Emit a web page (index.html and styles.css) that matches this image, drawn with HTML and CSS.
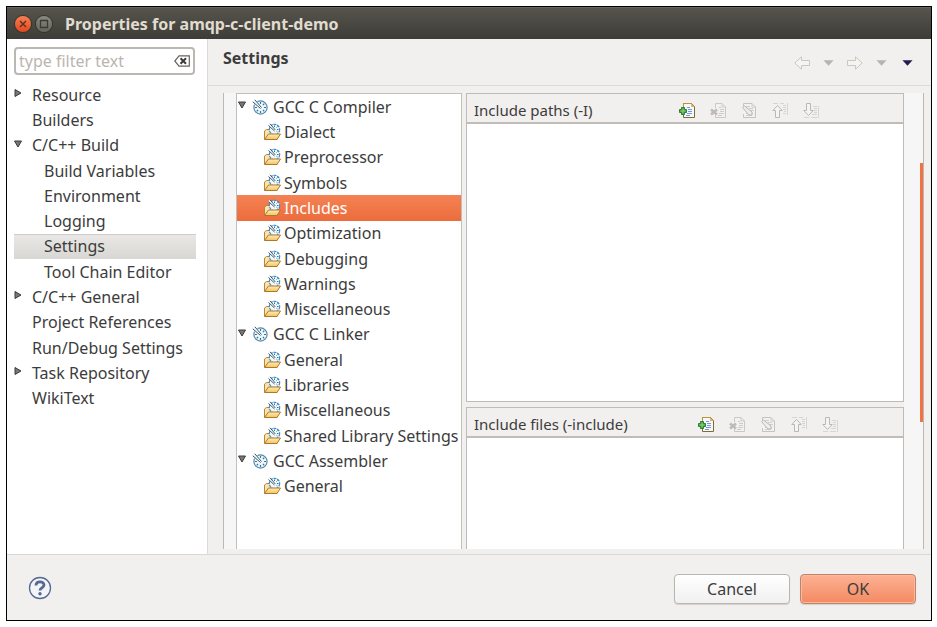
FILE: index.html
```html
<!DOCTYPE html>
<html lang="en">
<head>
<meta charset="utf-8">
<meta name="viewport" content="width=device-width, initial-scale=1">
<title>Properties for amqp-c-client-demo</title>
<link rel="stylesheet" href="styles.css">
</head>
<body>
<svg class="sprites" aria-hidden="true">
  <defs>
    <linearGradient id="folder-fill" x1="0" y1="0" x2="0" y2="1">
      <stop offset="0" stop-color="#fdeebb"/><stop offset="1" stop-color="#f3c45c"/>
    </linearGradient>
    <symbol id="right" viewBox="0 0 8 8"><path d="M1 .5v7L7 4z" fill="#777" stroke="#3c3c3c"/></symbol>
    <symbol id="down" viewBox="0 0 8 8"><path d="M.5 1h7L4 7z" fill="#777" stroke="#3c3c3c"/></symbol>
    <symbol id="tool" viewBox="0 0 16 16">
      <circle cx="8.500" cy="8.500" r="6.600" fill="#eef7fb" stroke="#5b89a8" stroke-width="1.200"/>
      <path d="M8.500 3v2M8.500 12v2M3 8.500h2M12 8.500h2M12.300 4.700l-1.400 1.400M4.700 12.300l1.400-1.400M12.300 12.300l-1.400-1.400" stroke="#2c79a5" stroke-width="1.200"/>
      <path d="M1 2.500l7 7M2.500 1l7 7" stroke="#fff" stroke-width="2"/>
      <path d="M.8 2.800l7.700 6.700M2.800.8l6.700 7.700" stroke="#2c4f6a"/>
    </symbol>
    <symbol id="folder" viewBox="0 0 18 18">
      <path d="M1.500 16V8l2-1.500h3l2 2h6v7.500z" fill="#f8e4b0" stroke="#bd8433"/>
      <circle cx="11.500" cy="6.500" r="5.200" fill="#f1f9fd" stroke="#3c86b8" stroke-width="1.100" stroke-dasharray="3 .800"/>
      <path d="M11.500 2.500v1.500M15.500 6.500H14M14.500 3.500l-1 1M14.500 9l-1-.800" stroke="#2374aa"/>
      <path d="M6 1.500l6 6" stroke="#fff" stroke-width="2.400"/>
      <path d="M5.500 2.500l6 5.500M7 .8l5.300 6.200" stroke="#244866" stroke-width=".900"/>
      <path d="M1.500 16.500l4-5.500h12l-3.500 5.500z" fill="url(#folder-fill)" stroke="#b0762a"/>
    </symbol>
    <symbol id="add" viewBox="0 0 16 16">
      <path d="M4.500 1.500h8l3 3v11h-11z" fill="#f4f8ff" stroke="#806b35"/>
      <path d="M4.500 5V1.500H12L15.500 5" fill="none" stroke="#c49032"/><path d="M12 1.500V5h3.500z" fill="#e6b65c"/>
      <path d="M8 5.500h3M9 7.500h4M9 9.500h4M8 11.500h5M7 13.500h4" stroke="#7799d2"/>
      <path d="M2.500 5.500h3v2h2v3h-2v2h-3v-2h-2v-3h2z" fill="#4aa13d" stroke="#2b7d3b"/><path d="M4 6.500v5M1.500 9h5" stroke="#8ad470"/>
    </symbol>
    <symbol id="delete" viewBox="0 0 16 16">
      <path d="M5.500 6V1.500H12L15.500 5v10.500h-10V13" fill="#f2f1ef" stroke="#cbc9c6"/><path d="M12 1.500V5h3.500M9 5.500h2M10 7.500h4M10 9.500h4M9 11.500h5M8 13.500h4" fill="none" stroke="#cecccb"/>
      <path d="M1 7.500l6 5M7 7.500l-6 5" stroke="#bfb9b7" stroke-width="2.600"/>
    </symbol>
    <symbol id="edit" viewBox="0 0 16 16">
      <path d="M2.500 4V1.500H11L14.500 5v10.500h-12V12" fill="#f2f1ef" stroke="#c5c3c0"/><path d="M11 1.500V5h3.500M5 4.500h4M8 6.500h4M9 8.500h4M5 11.500h7M5 13.500h6" fill="none" stroke="#d0cecb"/>
      <path d="M1.500 5.500l2-1.500 7.500 6v3H8z" fill="#efedeb" stroke="#b9b7b4"/>
    </symbol>
    <symbol id="up" viewBox="0 0 16 16">
      <path d="M1 1.500h5M8 1.500h4M11 3.500h3M11 5.500h3M11 7.500h3M12 9.500h2M11 11.500h3M15.500 1v12" stroke="#d6d5d2"/>
      <path d="M5.500 3.500L.8 8.500h2.700v7h4v-7h2.700z" fill="#f5f4f3" stroke="#bab8b5"/>
    </symbol>
    <symbol id="down-move" viewBox="0 0 16 16">
      <path d="M10 4.500h4M11 6.500h3M11 8.500h3M11 10.500h3M9 12.500h5M1 15.500h5M8 15.500h6M15.500 4v12" stroke="#d6d5d2"/>
      <path d="M5.500 13.500L.8 8.500h2.700v-7h4v7h2.700z" fill="#f5f4f3" stroke="#bab8b5"/>
    </symbol>
    <symbol id="back" viewBox="0 0 16 14"><path d="M.8 7L7.500.8v3.700h8v5h-8v3.700z" fill="#f5f4f1" stroke="#c9c7c2"/></symbol>
    <symbol id="forward" viewBox="0 0 16 14"><path d="M15.200 7L8.500.8v3.700h-8v5h8v3.700z" fill="#f5f4f1" stroke="#c9c7c2"/></symbol>
    <symbol id="menu" viewBox="0 0 12 6"><path d="M.5 0h11L6 6z" fill="currentColor"/></symbol>
  </defs>
</svg>

<main class="window">
  <header class="titlebar">
    <button class="window-button close" aria-label="Close"><svg viewBox="0 0 16 16"><path d="M5 5l6 6M11 5l-6 6" stroke="#64301f" stroke-width="1.500"/></svg></button>
    <button class="window-button maximize" aria-label="Maximize"><svg viewBox="0 0 16 16"><path d="M4.500 4.500h7v7h-7z" fill="none" stroke="#3b3a36" stroke-width="1.300"/></svg></button>
    <h1>Properties for amqp-c-client-demo</h1>
  </header>

  <div class="body">
    <nav class="sidebar" aria-label="Property pages">
      <div class="filter">
        <input type="text" aria-label="Filter" placeholder="type filter text">
        <button aria-label="Clear filter"><svg viewBox="0 0 16 12"><path d="M5 .8h10.300v10.400H5L.8 6z" fill="#fff" stroke="#66645f" stroke-width="1.200"/><path d="M6.500 3.200l5.500 5.600M12 3.200L6.500 8.800" stroke="#3c3b38" stroke-width="2"/></svg></button>
      </div>
      <ul class="tree pages">
        <li><svg class="arrow"><use href="#right"/></svg>Resource</li>
        <li>Builders</li>
        <li><svg class="arrow"><use href="#down"/></svg>C/C++ Build</li>
        <li class="child">Build Variables</li>
        <li class="child">Environment</li>
        <li class="child">Logging</li>
        <li class="child current">Settings</li>
        <li class="child">Tool Chain Editor</li>
        <li><svg class="arrow"><use href="#right"/></svg>C/C++ General</li>
        <li>Project References</li>
        <li>Run/Debug Settings</li>
        <li><svg class="arrow"><use href="#right"/></svg>Task Repository</li>
        <li>WikiText</li>
      </ul>
    </nav>

    <section class="page">
      <header class="page-header">
        <h2>Settings</h2>
        <div class="history">
          <button aria-label="Back"><svg class="arrow-icon"><use href="#back"/></svg></button>
          <button aria-label="Back history"><svg class="menu-icon"><use href="#menu"/></svg></button>
          <button aria-label="Forward"><svg class="arrow-icon"><use href="#forward"/></svg></button>
          <button aria-label="Forward history"><svg class="menu-icon"><use href="#menu"/></svg></button>
          <button aria-label="View menu"><svg class="menu-icon active"><use href="#menu"/></svg></button>
        </div>
      </header>

      <div class="workspace">
        <div class="tool-tree">
          <ul class="tree tools">
            <li><svg class="arrow"><use href="#down"/></svg><svg class="icon"><use href="#tool"/></svg>GCC C Compiler</li>
            <li class="child"><svg class="icon folder"><use href="#folder"/></svg>Dialect</li>
            <li class="child"><svg class="icon folder"><use href="#folder"/></svg>Preprocessor</li>
            <li class="child"><svg class="icon folder"><use href="#folder"/></svg>Symbols</li>
            <li class="child selected"><svg class="icon folder"><use href="#folder"/></svg>Includes</li>
            <li class="child"><svg class="icon folder"><use href="#folder"/></svg>Optimization</li>
            <li class="child"><svg class="icon folder"><use href="#folder"/></svg>Debugging</li>
            <li class="child"><svg class="icon folder"><use href="#folder"/></svg>Warnings</li>
            <li class="child"><svg class="icon folder"><use href="#folder"/></svg>Miscellaneous</li>
            <li><svg class="arrow"><use href="#down"/></svg><svg class="icon"><use href="#tool"/></svg>GCC C Linker</li>
            <li class="child"><svg class="icon folder"><use href="#folder"/></svg>General</li>
            <li class="child"><svg class="icon folder"><use href="#folder"/></svg>Libraries</li>
            <li class="child"><svg class="icon folder"><use href="#folder"/></svg>Miscellaneous</li>
            <li class="child"><svg class="icon folder"><use href="#folder"/></svg>Shared Library Settings</li>
            <li><svg class="arrow"><use href="#down"/></svg><svg class="icon"><use href="#tool"/></svg>GCC Assembler</li>
            <li class="child"><svg class="icon folder"><use href="#folder"/></svg>General</li>
          </ul>
        </div>
        <div class="options">
          <section class="option paths">
            <header><h3>Include paths (-I)</h3>
              <div class="toolbar">
                <button aria-label="Add"><svg><use href="#add"/></svg></button>
                <button aria-label="Delete"><svg><use href="#delete"/></svg></button>
                <button aria-label="Edit"><svg><use href="#edit"/></svg></button>
                <button aria-label="Move up"><svg><use href="#up"/></svg></button>
                <button aria-label="Move down"><svg><use href="#down-move"/></svg></button>
              </div>
            </header>
            <div class="list"></div>
          </section>
          <section class="option files">
            <header><h3>Include files (-include)</h3>
              <div class="toolbar">
                <button aria-label="Add"><svg><use href="#add"/></svg></button>
                <button aria-label="Delete"><svg><use href="#delete"/></svg></button>
                <button aria-label="Edit"><svg><use href="#edit"/></svg></button>
                <button aria-label="Move up"><svg><use href="#up"/></svg></button>
                <button aria-label="Move down"><svg><use href="#down-move"/></svg></button>
              </div>
            </header>
            <div class="list"></div>
          </section>
        </div>
        <div class="scrollbar"></div>
      </div>
    </section>
  </div>

  <footer class="actions">
    <button class="help" aria-label="Help"><svg viewBox="0 0 24 24"><circle cx="12" cy="12" r="10.500" fill="#f3f4f7" stroke="#566a8f" stroke-width="1.300"/><path d="M8 9.500C8 4.500 16 4.800 16 9c0 3-4 2.800-4 5.500" fill="none" stroke="#566a8f" stroke-width="2.800"/><circle cx="12" cy="17.800" r="1.700" fill="#566a8f"/></svg></button>
    <button class="action">Cancel</button>
    <button class="action primary">OK</button>
  </footer>
</main>
</body>
</html>
```
FILE: styles.css
```css
* {
  box-sizing: border-box;
}

body {
  margin: 0;
  min-height: 100vh;
  padding: 6px 5px 6px 6px;
  display: flex;
  background: #fff;
  color: #3c3c3c;
  font: 16px/20px "Noto Sans", "Open Sans", sans-serif;
}

h1, h2, h3, ul {
  margin: 0;
  padding: 0;
}

svg {
  display: block;
  flex: none;
}

button {
  padding: 0;
  border: 0;
  background: none;
  color: inherit;
  font: inherit;
}

.sprites {
  position: absolute;
  width: 0;
  height: 0;
}

.window {
  flex: 1;
  display: flex;
  flex-direction: column;
  border: 1px solid #000;
  background: #f1f0ee;
}

.titlebar {
  display: flex;
  align-items: center;
  gap: 5px;
  height: 32px;
  padding: 1px 8px 0;
  background: linear-gradient(#56544c, #3d3c38);
  border-top: 1px solid #65635a;
}

.titlebar h1 {
  margin-left: 8px;
  color: #e0dccf;
  font-size: 16px;
  line-height: 20px;
}

.window-button {
  width: 16px;
  height: 16px;
  border-radius: 50%;
  box-shadow: 0 0 0 1px #34332f;
}

.close {
  background: linear-gradient(#f77f56, #e3491b);
}

.maximize {
  background: linear-gradient(#8b897f, #65635b);
}

.body {
  flex: 1;
  display: flex;
}

.sidebar {
  width: 201px;
  padding: 8px 11px 0 7px;
  border-right: 1px solid #dcdad8;
  background: #fff;
}

.filter {
  display: flex;
  align-items: center;
  height: 28px;
  margin-right: 1px;
  padding: 0 3px;
  border: 2px solid #bbb7b2;
  border-radius: 4px;
}

.filter input {
  flex: 1;
  min-width: 0;
  padding: 0;
  border: 0;
  outline: 0;
  background: none;
  font: inherit;
}

.filter input::placeholder {
  color: #bbb5af;
}

.filter svg {
  width: 16px;
  height: 12px;
}

.tree {
  display: grid;
  grid-auto-rows: 1fr;
  list-style: none;
}

.tree li {
  position: relative;
  display: flex;
  align-items: center;
  white-space: nowrap;
}

.arrow {
  position: absolute;
  width: 8px;
  height: 8px;
}

.pages {
  height: 329px;
  margin-top: 7px;
}

.pages li {
  padding-left: 18px;
}

.pages .child {
  padding-left: 30px;
}

.pages .arrow {
  left: 0;
  top: 7px;
}

.pages .current {
  background: linear-gradient(#e9e8e6, #d9d7d4);
  box-shadow: inset 0 1px #cfcdca;
}

.page {
  flex: 1;
  min-width: 0;
  display: flex;
  flex-direction: column;
}

.page-header {
  display: flex;
  justify-content: space-between;
  align-items: center;
  height: 47px;
  padding: 0 18px 0 15px;
  border-bottom: 1px solid #dddbd8;
}

.page-header h2 {
  padding-bottom: 8px;
  font-size: 16px;
  line-height: 20px;
}

.history {
  display: flex;
  align-items: center;
  gap: 13px;
  padding-top: 2px;
  color: #b5b4b3;
}

.arrow-icon {
  width: 16px;
  height: 14px;
}

.menu-icon {
  width: 11px;
  height: 6px;
}

.active {
  margin-left: 2px;
  color: #211b50;
}

.workspace {
  flex: 1;
  display: flex;
  margin: 7px 7px 5px 15px;
  padding-left: 12px;
  border-left: 1px solid #bab8b5;
  border-right: 1px solid #bab8b5;
  background: #f6f6f6;
}

.tool-tree {
  width: 226px;
  border: 1px solid #c2bfbb;
  border-bottom: 0;
  background: #fff;
}

.tools {
  height: 405px;
}

.tools li {
  padding-left: 15px;
  gap: 5px;
}

.tools .child {
  padding-left: 26px;
  gap: 3px;
}

.tools .arrow {
  left: 1px;
  top: 7px;
}

.icon {
  width: 16px;
  height: 16px;
}

.folder {
  width: 18px;
  height: 18px;
}

.selected {
  background: linear-gradient(#f58254, #ec6c3c);
  color: #fff;
}

.options {
  flex: 1;
  display: flex;
  flex-direction: column;
  gap: 5px;
  padding-left: 4px;
  background: #f1f0ee;
}

.option {
  display: flex;
  flex-direction: column;
  border: 1px solid #bfbcb8;
}

.paths {
  flex: 1;
}

.files {
  border-bottom: 0;
}

.option header {
  display: flex;
  align-items: center;
  height: 30px;
  padding: 3px 0 0 7px;
  border-bottom: 2px solid #c0bdb9;
}

.option h3 {
  width: 205px;
  font-size: 15px;
  font-weight: 400;
  line-height: 20px;
}

.files h3 {
  width: 224px;
}

.toolbar {
  display: flex;
  gap: 15px;
}

.toolbar svg {
  width: 16px;
  height: 16px;
}

.list {
  flex: 1;
  min-height: 111px;
  background: #fff;
}

.scrollbar {
  width: 19px;
  padding-top: 70px;
}

.scrollbar::before {
  content: "";
  display: block;
  width: 3px;
  height: 259px;
  margin-left: auto;
  background: #f37243;
}

.actions {
  display: flex;
  align-items: center;
  gap: 10px;
  height: 66px;
  padding: 0 15px 0 21px;
  border-top: 1px solid #dad8d5;
}

.help {
  margin-right: auto;
}

.help svg {
  width: 24px;
  height: 24px;
}

.action {
  width: 116px;
  height: 30px;
  margin-top: 2px;
  border: 1px solid #b9b5af;
  border-radius: 4px;
  background: linear-gradient(#fff, #f0f0f0);
  box-shadow: 0 1px 1px #d4d1cd;
}

.primary {
  border-color: #bd846c;
  background: linear-gradient(#fdb193, #f38a62);
  box-shadow: inset 0 0 0 1px #ffb89b, 0 1px 1px #d4d1cd;
}
```
